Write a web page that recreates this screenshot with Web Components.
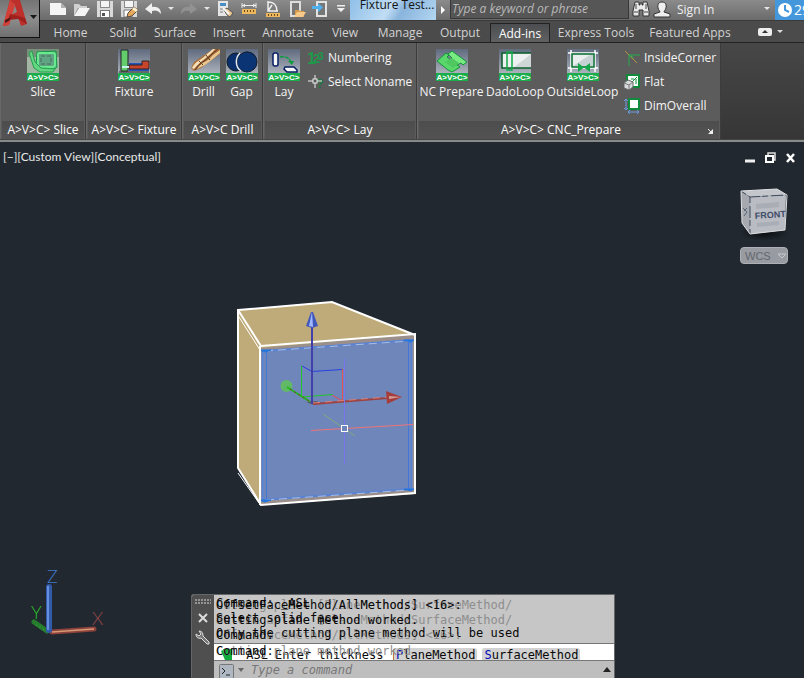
<!DOCTYPE html>
<html lang="en">
<head>
<meta charset="utf-8">
<title>Fixture Test</title>
<style>
html,body{margin:0;height:100%;overflow:hidden;background:#21282f;font:12px/16px "Open Sans","Noto Sans",sans-serif;color:#f0f0f0}
cad-app{height:100vh}
</style>
</head>
<body>
<cad-app></cad-app>
<script>
const define = (name, html) => customElements.define(name, class extends HTMLElement {
  constructor() {
    super();
    this.attachShadow({ mode: 'open' });
  }
  connectedCallback() {
    if (this.shadowRoot.childNodes.length) return;
    const base = '<style>*{box-sizing:border-box}button,input{font:inherit;color:inherit;background:none;border:0;margin:0;padding:0}svg{display:block}</style>';
    const tpl = document.createElement('template');
    tpl.innerHTML = base + (typeof html === 'function' ? html(this) : html);
    this.shadowRoot.append(tpl.content.cloneNode(true));
  }
});

const badge = '<rect y="24" width="32" height="8" fill="#1bad4b"/><text x="16" y="31" text-anchor="middle" font-family="Liberation Sans,sans-serif" font-weight="700" font-size="8" fill="#fff">A&gt;V&gt;C&gt;</text>';
const plate = '<defs><linearGradient id="g" x1="0" y1="0" x2="0" y2="1"><stop offset="0" stop-color="#5f6a7e"/><stop offset="1" stop-color="#c4c9cf"/></linearGradient></defs><rect width="32" height="32" fill="url(#g)"/>';

const icons = {
  new: [20, 20, '<path d="M3 3H14L19 8V15H3Z" fill="#f4f4f4"/><path d="M14 3V8H19Z" fill="#b0b0b0"/>'],
  open: [20, 20, '<path d="M3 14V4H8L10 6H16V8H7L3 16Z" fill="#d0d0d0"/><path d="M8 8H19L14 16H3Z" fill="#f4f4f4"/>'],
  save: [20, 20, '<path d="M2 1H18V17H2Z" fill="#dadada"/><path d="M5 1H15V8H5Z" fill="#8a8a8a"/><path d="M6 1H14V7H6Z" fill="#f4f4f4"/><path d="M5 10H15V17H5Z" fill="#777"/><path d="M6 11H14V17H6Z" fill="#fff"/><path d="M7 13H10V16H7Z" fill="#555"/>'],
  saveas: [20, 20, '<path d="M2 1H18V17H2Z" fill="#dadada"/><path d="M5 1H15V8H5Z" fill="#8a8a8a"/><path d="M6 1H14V7H6Z" fill="#f4f4f4"/><path d="M5 10H13V17H5Z" fill="#fff" stroke="#777"/><path d="M9 13L15 7L19 10L13 16L8 17Z" fill="#e5a85c" stroke="#5a4a3a"/><path d="M15 7L19 10L17 12L13 9Z" fill="#fff1d0"/>'],
  undo: [20, 20, '<path d="M2 9L9 3V7C15 6 18 9 18 14C15 10 12 10 9 11V14Z" fill="#efefef"/>'],
  redo: [20, 20, '<path d="M18 9L11 3V7C5 6 2 9 2 14C5 10 8 10 11 11V14Z" fill="#929292"/>'],
  match: [20, 20, '<path d="M3 1H13V16H3Z" fill="#e6e6e6"/><path d="M5 3H11V6H5Z" fill="#4a90c8"/><path d="M5 9H10M5 12H8" stroke="#777"/><path d="M9 10L12 8L18 13L15 17L12 15Z" fill="#e9c58f" stroke="#555"/><path d="M8 8L14 14" stroke="#f6f6f6" stroke-width="2"/>'],
  measure: [20, 20, '<path d="M3 3V8M17 3V8M3 5.5H17M6 4L4 5.5L6 7M14 4L16 5.5L14 7" stroke="#eee" fill="none"/><path d="M3 9H17V14H3Z" fill="#edb75d"/><path d="M5.5 10V12M8.5 10V12M11.5 10V12M14.5 10V12" stroke="#6b4a1c"/>'],
  angle: [20, 20, '<path d="M5 1V11H15M5 2C11 2 14 6 14 11M5 11L9 5" stroke="#eee" fill="none" stroke-width="1.5"/><path d="M3 13H17V17H3Z" fill="#edb75d"/><path d="M5.5 14V16M8.5 14V16M11.5 14V16M14.5 14V16" stroke="#6b4a1c"/>'],
  mopen: [20, 20, '<path d="M4 2H13V16H4Z" fill="#777" stroke="#ddd" stroke-width="2"/><path d="M8 10H12L13 11H17V17H8Z" fill="#d79a4a"/><path d="M10 12H19L16 17H7Z" fill="#f5c987"/>'],
  msave: [20, 20, '<path d="M6 2H15V16H6Z" fill="#777" stroke="#e2e2e2" stroke-width="2"/><path d="M1 6H7V3L12 7.5L7 12V9H1Z" fill="#4fb0ee"/>'],
  caret: [10, 20, '<path d="M2 7H8L5 10Z" fill="#e6e6e6"/>'],
  more: [10, 20, '<path d="M1 5H9V6.5H1ZM1 8H9L5 12Z" fill="#f0f0f0"/>'],
  binoc: [18, 18, '<path d="M3 2H7V5H8V3H10V5H11V2H15L17 11V16H11V10H7V16H1V11Z" fill="#e9e9e9" stroke="#333"/><path d="M2 12H6M12 12H16M4 4V9M14 4V9" stroke="#444"/>'],
  user: [18, 18, '<path d="M9 1C13 1 13.5 4 13 7C12.5 9 11 10 11 11L17 13V16H1V13L7 11C7 10 5.5 9 5 7C4.5 4 5 1 9 1Z" fill="#eee" stroke="#333"/>'],
  clock: [16, 18, '<circle cx="8" cy="9" r="7" fill="#fff"/><path d="M8 4V9L12 11" fill="none" stroke="#4597dc" stroke-width="2"/>'],
  slice: [32, 32, '<rect width="32" height="32" fill="#a2b7a3"/><rect width="32" height="8" fill="#78917b"/><path d="M10 3L29 2L30 18L26 22L13 21L9 17Z" fill="#4fae78" stroke="#159846"/><path d="M11 5Q11 4 13 4H26Q28 4 28 6V16Q28 18 25 18H13Q11 18 11 16Z" fill="#5fa583" stroke="#69e98d" stroke-width="2"/><path d="M14 7H24V15H14Z" fill="none" stroke="#4d675a" stroke-dasharray="4 2"/><path d="M2 4L5 2L8 13L14 19L28 20L26 23H13L7 19Z" fill="#62d482" stroke="#249f4c"/>' + badge],
  fixture: [32, 32, plate + '<path d="M3 1H10V22H3Z" fill="#63cd6c" stroke="#222"/><path d="M11 14H25V16H11ZM11 20H31V22H11Z" fill="#2455bd"/><path d="M11 16H24V12H31V20H11Z" fill="#c8452c" stroke="#332222"/><path d="M4 18H11" stroke="#c5f4f0" stroke-width="2"/><path d="M1 23H31" stroke="#222"/>' + badge],
  drill: [32, 32, plate + '<path d="M25 0H32V5L13 19L6 22L3 19L6 13Z" fill="#a8713f"/><path d="M4 19C7 12 14 11 19 5L25 0L27 0C22 7 12 12 6 20Z" fill="#f6e0b8"/><path d="M9 20C13 13 20 13 25 6L32 1V4C27 8 23 12 17 16Z" fill="#e8c791"/><path d="M7 21C11 14 18 12 24 5L30 0" fill="none" stroke="#5f341c"/><path d="M11 12L15 16M18 6L22 11" stroke="#6b3f24"/>' + badge],
  gap: [32, 32, plate + '<ellipse cx="10" cy="13" rx="9" ry="9" fill="#092f6d" stroke="#101820"/><path d="M18 3C26 1 31 6 31 13C31 20 25 24 18 21Z" fill="#092f6d"/><ellipse cx="21" cy="13" rx="10" ry="10" fill="#0a3474" stroke="#182030"/><path d="M14 4C9 9 9 18 15 22" fill="none" stroke="#dfe6ef" stroke-width="1.5"/>' + badge],
  lay: [32, 32, plate + '<rect x="5" y="4" width="5" height="13" rx="2" fill="#f7f7f7" stroke="#071f63" stroke-width="1.5"/><path d="M17 18H26L29 21V23H19L16 20Z" fill="#f7f7f7" stroke="#071f63" stroke-width="1.5"/><path d="M12 8C18 7 22 9 23 14" fill="none" stroke="#0c9d3e" stroke-width="1.5" stroke-dasharray="4 1"/><path d="M20 12H26L24 16Z" fill="#0c9d3e"/>' + badge],
  nc: [32, 32, plate + '<path d="M1 12L10 4L13 6L11 8L24 18L16 23L12 21Z" fill="#59d76a" stroke="#14933a"/><path d="M12 5L16 2L31 13L27 16L25 14L21 16L14 11L16 9Z" fill="#78ea82" stroke="#14933a"/><path d="M9 13L16 9L23 14L17 19Z" fill="#50c760"/>' + badge],
  dado: [32, 32, plate + '<path d="M3 4H32V19H3Z" fill="#cfd6d6"/><path d="M4 5H32L14 19H4Z" fill="#eef1f1"/><path d="M32 4H3V19H32" stroke="#0b5d2b" stroke-width="1.5" fill="none"/><rect x="8" y="3" width="5" height="18" fill="none" stroke="#13aa48" stroke-width="1.5"/>' + badge],
  outside: [32, 32, plate + '<path d="M1 4H31M1 19H31M4 1V23M28 1V23" stroke="#fff" stroke-width="1.5"/><rect x="5" y="5" width="22" height="13" fill="#c5d1d2" stroke="#0b7434" stroke-width="1.5"/><path d="M6 17L23 6H6Z" fill="#e9eeee"/><path d="M11 14L17 18.5L11 23ZM23 14L17 18.5L23 23Z" fill="#12a84a"/>' + badge],
  num: [16, 16, '<g font-family="Liberation Sans,sans-serif" font-weight="700" fill="#1c9a4a"><text x="-1" y="14" font-size="16">1</text><text x="5" y="13" font-size="13">2</text><text x="10" y="10" font-size="10">3</text></g>'],
  noname: [16, 16, '<text x="8" y="14" font-family="Liberation Sans,sans-serif" font-weight="700" font-size="12" fill="#157a3a">?</text><path d="M7 1V14M0 7H14" stroke="#eee"/><rect x="5" y="5" width="4" height="4" fill="#5b5b5b" stroke="#eee"/>'],
  corner: [16, 16, '<path d="M1 1L13 13" stroke="#b49345"/><path d="M5 16V5H16M5 5L10 8" stroke="#25ad50" fill="none"/>'],
  flat: [16, 16, '<rect x="3" y="1" width="12" height="12" fill="#f5fff7" stroke="#118a3c" stroke-width="2"/><path d="M8 8L13 3M7 5H10M12 5V10" stroke="#118a3c" fill="none"/><path d="M0 9L4 6L9 8V13L5 16L0 14Z" fill="#d8dadd" stroke="#666"/><path d="M0 9L5 11L9 8M5 11V16" stroke="#777" fill="none"/>'],
  dim: [16, 16, '<rect x="5" y="1" width="10" height="10" fill="#fff" stroke="#118a3c" stroke-width="2"/><path d="M2 1V12M0 3L2 1L4 3M0 10L2 12L4 10M4 14H15M6 12L4 14L6 16M13 12L15 14L13 16" stroke="#6d9be0" fill="none"/>']
};
const svg = n => `<svg width="${icons[n][0]}" height="${icons[n][1]}" viewBox="0 0 ${icons[n][0]} ${icons[n][1]}" aria-hidden="true">${icons[n][2]}</svg>`;

define('icon-button', el => `<style>:host{display:block;flex:0 0 24px}:host([narrow]){flex-basis:12px}:host([wide]){flex-basis:16px}
button{width:100%;height:20px;display:flex;justify-content:center;align-items:flex-start}</style>
<button aria-label="${el.getAttribute('label')}">${svg(el.getAttribute('icon'))}</button>`);

define('ribbon-tab', `<style>:host{display:block;flex:none;color:#d2d2d2}
button{width:100%;height:20px;white-space:nowrap;line-height:18px;text-align:center}
:host([active]){color:#fff}:host([active]) button{background:linear-gradient(#4b4d50,#626262);border:1px solid #222;border-bottom:0;line-height:16px}</style>
<button><slot></slot></button>`);

define('tool-button', el => `<style>:host{display:block}button{display:flex;flex-direction:column;align-items:center;width:100%;white-space:nowrap;color:#f4f4f4}
span{line-height:22px}
:host([small]) button{flex-direction:row;gap:4px;height:24px}</style>
<button>${svg(el.getAttribute('icon'))}<span><slot></slot></span></button>`);

define('ribbon-panel', el => `<style>:host{display:flex;flex-direction:column;background:#5c5c5c;border-right:1px solid #3c3c3c;border-left:1px solid #686868}
.body{flex:1;display:flex;justify-content:center;padding-top:6px}
:host([start]) .body{justify-content:flex-start}
footer{display:flex;align-items:center;height:18px;margin:0 1px;background:linear-gradient(#4d4d4d,#535353);color:#fff;white-space:nowrap}
footer span{flex:1;text-align:center;line-height:18px}footer button{width:16px;height:16px}footer svg{margin:6px 4px 4px}</style>
<div class="body"><slot></slot></div>
<footer><span>${el.getAttribute('label')}</span>${el.hasAttribute('launcher') ? '<button aria-label="Panel settings"><svg width="7" height="7"><path d="M1 1L4 4" stroke="#eee"/><path d="M6 1V6H1Z" fill="#eee"/></svg></button>' : ''}</footer>`);

define('app-menu', `<style>:host{display:block;flex:0 0 40px;height:38px}
button{width:40px;height:38px;background:linear-gradient(#747474,#8d8d8d 50%,#6f6f6f);border:1px solid #111;border-top:0;border-left:0}</style>
<button aria-label="Application menu"><svg width="39" height="37" viewBox="0 0 39 37"><path d="M10 0H20L27 24L21 26L18 17L11 18L9 25L3 26Z" fill="#bd2f2b"/><path d="M14 3L17 12L11 15Z" fill="#8c8685"/><path d="M10 0L3 26L9 25L15 5Z" fill="#d34038"/><path d="M10 14L25 18L27 24L18 19L8 20Z" fill="#9e211e"/><path d="M5 20L11 17L9 21L5 23Z" fill="#4f1917"/><path d="M30 15H37L33.5 19Z" fill="#181818"/></svg></button>`);

define('title-bar', `<style>:host{display:flex;height:20px;padding-left:5px;background:linear-gradient(#8b8b8b,#6b6b6b)}
.doc{flex:0 0 86px;text-align:center;margin-left:1px;padding-left:8px;height:20px;background:linear-gradient(120deg,#8fbfe8,#c1ddf3 45%,#89b4dc 60%,#b4d7f3);color:#151515;line-height:10px;white-space:nowrap}
.next{flex:0 0 14px;height:20px}.next svg{margin:4px 4px}
input{flex:1 1 178px;max-width:179px;min-width:0;height:19px;background:#565656;border:1px solid #383838;border-top:0;padding:0 1px 1px}
input::placeholder{color:#b9b9b9;font-style:italic;opacity:1}
.sign{display:flex;gap:6px;align-items:center;white-space:nowrap}
.spacer{flex:1}
.clock{flex:0 0 29px;overflow:hidden;display:flex;align-items:center;background:#4597dc;color:#fff;font-size:14px;padding-left:2px;gap:1px;white-space:nowrap}
.clock svg{flex:none}</style>
<icon-button icon="new" label="New"></icon-button><icon-button icon="open" label="Open"></icon-button><icon-button icon="save" label="Save"></icon-button><icon-button icon="saveas" label="Save as"></icon-button><icon-button icon="undo" label="Undo"></icon-button><icon-button narrow icon="caret" label="Undo list"></icon-button><icon-button icon="redo" label="Redo"></icon-button><icon-button narrow icon="caret" label="Redo list"></icon-button><icon-button icon="match" label="Match properties"></icon-button><icon-button icon="measure" label="Distance"></icon-button><icon-button icon="angle" label="Angle"></icon-button><icon-button icon="mopen" label="Open from mobile"></icon-button><icon-button icon="msave" label="Save to mobile"></icon-button><icon-button wide icon="more" label="Customize"></icon-button>
<div class="doc">Fixture Test...</div>
<button class="next" aria-label="Show search"><svg width="6" height="10"><path d="M1 1V9L5 5Z" fill="#fff"/></svg></button>
<input type="text" aria-label="Search" placeholder="Type a keyword or phrase">
<icon-button icon="binoc" label="Search help"></icon-button>
<button class="sign">${svg('user')}Sign In</button>
<span class="spacer"></span>
<icon-button wide icon="caret" label="Account menu"></icon-button>
<button class="clock">${svg('clock')}29</button>`);

define('tab-strip', () => {
  const tabs = [['Home',55],['Solid',50],['Surface',54],['Insert',54],['Annotate',64],['View',50],['Manage',60],['Output',60],['Add-ins',60],['Express Tools',92],['Featured Apps',96]];
  return `<style>:host{display:flex;height:22px;padding:2px 0 0 3px;background:#4b4b4b;border-top:1px solid #3a3a3a}
.min{display:flex;gap:5px;align-items:center;padding-left:20px;height:18px}</style>
${tabs.map(([t, w]) => `<ribbon-tab style="width:${w}px"${t === 'Add-ins' ? ' active' : ''}>${t}</ribbon-tab>`).join('')}
<button class="min" aria-label="Minimize ribbon"><svg width="14" height="8"><rect width="14" height="8" rx="2" fill="#eee"/><path d="M4 5L7 2L10 5Z" fill="#333"/></svg><svg width="6" height="4"><path d="M0 0H6L3 3Z" fill="#ddd"/></svg></button>`;
});

define('ribbon-bar', `<style>:host{display:flex;height:98px;background:linear-gradient(#474747,#363636);border-top:1px solid #222;border-bottom:1px solid #444;box-shadow:0 2px #868a88;margin-bottom:3px}
.col{display:flex;flex-direction:column;align-items:flex-start;margin:-3px 0 0 4px}</style>
<ribbon-panel label="A&gt;V&gt;C&gt; Slice" style="width:86px"><tool-button icon="slice">Slice</tool-button></ribbon-panel>
<ribbon-panel label="A&gt;V&gt;C&gt; Fixture" style="width:96px"><tool-button icon="fixture">Fixture</tool-button></ribbon-panel>
<ribbon-panel label="A&gt;V&gt;C Drill" style="width:81px"><tool-button icon="drill" style="width:38px">Drill</tool-button><tool-button icon="gap" style="width:38px">Gap</tool-button></ribbon-panel>
<ribbon-panel start label="A&gt;V&gt;C&gt; Lay" style="width:154px"><tool-button icon="lay" style="width:40px">Lay</tool-button><div class="col"><tool-button small icon="num">Numbering</tool-button><tool-button small icon="noname">Select Noname</tool-button></div></ribbon-panel>
<ribbon-panel start launcher label="A&gt;V&gt;C&gt; CNC_Prepare" style="width:304px"><tool-button icon="nc" style="width:67px">NC Prepare</tool-button><tool-button icon="dado" style="width:60px">DadoLoop</tool-button><tool-button icon="outside" style="width:75px">OutsideLoop</tool-button><div class="col"><tool-button small icon="corner">InsideCorner</tool-button><tool-button small icon="flat">Flat</tool-button><tool-button small icon="dim">DimOverall</tool-button></div></ribbon-panel>`);

define('view-cube', `<style>:host{display:flex;flex-direction:column;align-items:center;gap:6px}
.wcs{width:48px;height:17px;border-radius:4px;background:#989ba1;border:1px solid #aeb0b5;color:#63676e;font:11px/14px "Liberation Sans",sans-serif;display:flex;align-items:center;gap:6px;padding-left:4px}</style>
<svg width="56" height="56" viewBox="738 184 56 56" role="img" aria-label="View cube"><defs><radialGradient id="s"><stop offset="0" stop-color="#0b0e12"/><stop offset="1" stop-color="#0b0e12" stop-opacity="0"/></radialGradient></defs><ellipse cx="766" cy="232" rx="25" ry="8" fill="url(#s)"/>
<path d="M743 190L779 188L789 194L752 196Z" fill="#c3c6ca"/><path d="M743 190L752 196V233L744 222Z" fill="#a6aab0"/><path d="M752 196L788 194L787 229L752 233Z" fill="#b9bcc2"/>
<path d="M743 190L752 196L788 194M752 196V233" fill="none" stroke="#3f4c5c" stroke-dasharray="6 3 12 2"/><path d="M743 190L779 188L789 194L787 229L752 233L744 222Z" fill="none" stroke="#dddfe2"/>
<path d="M758 203L781 201V206L758 208ZM759 222L781 220V224L759 226Z" fill="#a9adb5"/><path d="M745 207L749 211L746 215M749 207L746 210" stroke="#5d6979" fill="none"/>
<text x="757" y="218" transform="rotate(-4 757 218)" font-family="Liberation Sans,sans-serif" font-weight="700" font-size="9" fill="#3f4c68">FRONT</text></svg>
<button class="wcs">WCS<svg width="10" height="6"><path d="M1 1H9L5 5Z" fill="none" stroke="#c6c8cc"/></svg></button>`);

define('cube-model', `<style>:host{display:block}</style>
<svg width="200" height="220" viewBox="230 295 200 220" role="img" aria-label="Solid model">
<path d="M238 310L332 302L415 335L414 493L261 505L238 468Z" fill="#bfab79"/>
<path d="M260 348L415 334V494L260 505Z" fill="#9a8f8a"/><path d="M263 351L412 340V489L263 500Z" fill="#6f86bb"/>
<path d="M262.5 352V500M411.5 341V489M263 351L412 340M263 500L412 489" stroke="#5a83d4" stroke-width="2"/><path d="M266.5 351V499M408.5 341V489" stroke="#4477d6"/><path d="M265 351L410 341M266 500L410 490" stroke="#a9bde2" stroke-dasharray="8 5"/>
<path d="M259 350H271L265 352ZM404 340H414L411 342ZM259 500H271L265 502ZM404 489H414L411 491Z" fill="#2476df" stroke="#2476df"/>
<path d="M238 310L332 302L415 335M238 309V468L261 505L415 493V334L261 346L238 310M260 346V505" fill="none" stroke="#fff" stroke-width="2"/>
<path d="M239 317L260 350M238 473L259 503" fill="none" stroke="#fff"/>
<path d="M301.5 366V397" stroke="#1fc527"/><path d="M302 366L312 371.5L342 369.5" stroke="#2940df" fill="none"/><path d="M342.5 369V401L332 395" stroke="#e65050" fill="none"/><path d="M302 397L333 394.500" stroke="#1fc527"/>
<circle cx="286.5" cy="386" r="6" fill="#61b967"/><path d="M287 387L312 403" stroke="#20ba20" stroke-width="2"/><path d="M290 389L312 403" stroke="#8c3028" stroke-dasharray="2 3"/>
<path d="M306 402L316 401L322 403L314 405Z" fill="#5e5968"/><path d="M312 404V325" stroke="#423fa9" stroke-width="2"/><path d="M306 326L311 312H313L318 326L312 328Z" fill="#4257bb"/><path d="M309 326L312 312L313 327Z" fill="#9db9ff"/>
<path d="M313 404L388 398" stroke="#9e4141" stroke-width="2"/><path d="M313 403L388 397" stroke="#df8073" stroke-dasharray="7 5"/><path d="M386 391L402 397L387 404Z" fill="#a43e3c"/><path d="M389 396L401 397L389 399Z" fill="#d59b96"/>
<path d="M344.5 359V464" stroke="#7873ee"/><path d="M311 430.5L413 424.5" stroke="#ee7377"/><path d="M323 414L355 436" stroke="#80aa7d"/><rect x="341.5" y="425.5" width="6" height="6" fill="#6f86bb" stroke="#fff"/>
</svg>`);

define('ucs-icon', `<style>:host{display:block}text{font-family:Lato,sans-serif;font-weight:300}</style>
<svg width="84" height="76" viewBox="25 564 84 76" role="img" aria-label="UCS axes"><path d="M34 622L47 631" stroke="#267d2e" stroke-width="5" stroke-linecap="round"/><path d="M36 625L46 631" stroke="#3dbb42" stroke-dasharray="1 3"/><path d="M52 632L94 629" stroke="#8d423e" stroke-width="5" stroke-linecap="round"/><path d="M52 632L94 629" stroke="#d59a72" stroke-width="1.5"/><path d="M49 587V630" stroke="#315ba9" stroke-width="6" stroke-linecap="round"/><path d="M48 586V630" stroke="#6690df" stroke-width="2"/>
<text x="47" y="583" font-size="18" fill="#4078cc">Z</text><text x="31" y="619" font-size="18" fill="#29c129">Y</text><text x="92" y="625" font-size="18" fill="#98494d">X</text></svg>`);

define('command-window', `<style>:host{display:flex;background:#c6c6c6;color:#080808;font:12px/15px "DejaVu Sans Mono",monospace;border:1px solid #666;border-bottom:0;border-radius:3px 0 0 0;overflow:hidden}
.rail{flex:0 0 22px;background:#4f4f4f;display:flex;flex-direction:column;align-items:center;gap:7px;padding-top:4px}
.main{flex:1;min-width:0}
.log{height:48px;padding-top:3px}
.row{position:relative;height:15px;white-space:pre}
.row span{position:absolute;left:2px;top:0}.row .up{top:-2px}
.row .ghost,.now .ghost{color:#8e8e8e}
.now{position:relative;height:18px;background:#fff;border-top:1px solid #777;border-bottom:1px solid #777;white-space:pre;overflow:hidden}
.now>*{position:absolute;top:0;left:2px}
.now .prompt{left:6px;top:4px;display:flex;gap:5px}
.now .opts{left:180px}
.opt{background:#d2d2d2;border-radius:3px;padding:0 2px}.opt b{font-weight:400;color:#0008b8}
.entry{height:17px;display:flex;align-items:flex-end;background:#bebebe;padding:0 3px 0 5px;gap:4px}
.entry svg{flex:none}.entry .mark{align-self:center}
.entry input{flex:1;min-width:0;height:15px;padding-left:3px}.entry input::placeholder{color:#777;opacity:1;font-style:italic}</style>
<div class="rail"><svg width="16" height="7"><path d="M0 1H16M0 4H16" stroke="#949494" stroke-width="2" stroke-dasharray="2 1"/></svg><button aria-label="Close"><svg width="10" height="10"><path d="M1 1L9 9M9 1L1 9" stroke="#ddd" stroke-width="2"/></svg></button><button aria-label="Customize"><svg width="16" height="16" viewBox="0 0 16 16"><path d="M4 1C7 1 8 3 8 6L14 12Q15 15 12 14L6 8C3 9 1 7 1 4L4 6L6 4Z" fill="#777" stroke="#ddd"/></svg></button></div>
<div class="main"><div class="log">
<div class="row"><span class="ghost">Cutting plane [PlaneMethod/SurfaceMethod/</span><span class="up">Command: _ASL</span><span>OffsetFaceMethod/AllMethods] &lt;16&gt;:</span></div>
<div class="row"><span class="ghost">Select a face [PlaneMethod/SurfaceMethod/</span><span class="up">Select solid face</span><span>Cutting plane method worked.</span></div>
<div class="row"><span class="ghost">OffsetFaceMethod/AllMethods] &lt;16&gt;:</span><span>Command:</span><span class="up">Only the cutting plane method will be used</span></div></div>
<div class="now"><div class="prompt"><svg width="14" height="14"><path d="M3 1H12V12H5L1 3L3 2L5 8Z" fill="#11ac3e"/></svg><span> ASL Enter thickness [</span></div><div class="prompt opts"><span class="opt"><b>P</b>laneMethod</span><span class="opt"><b>S</b>urfaceMethod</span></div><span class="ghost">Cutting plane method worked</span><span>Command:</span></div>
<label class="entry"><svg width="15" height="14"><rect x=".5" y=".5" width="14" height="15" rx="1" fill="#aeb7c2" stroke="#777"/><path d="M3 4L6 7L3 10M7 11H11" stroke="#222" fill="none"/></svg><svg class="mark" width="6" height="4"><path d="M0 0H6L3 4Z" fill="#666"/></svg><input type="text" aria-label="Command" placeholder="Type a command"><svg class="mark" width="8" height="5"><path d="M0 5L4 0L8 5Z" fill="#222"/></svg></label></div>`);

define('view-port', `<style>:host{display:block;position:relative;flex:1;min-height:0;overflow:hidden;background:#21282f}
.top{display:flex;justify-content:space-between;padding:6px 8px 0 3px}
.views{font-family:Lato,sans-serif;color:#e8e8e8;white-space:nowrap}
.win{display:flex;gap:9px;padding-top:2px}
view-cube{position:absolute;right:12px;top:42px}
cube-model{position:absolute;left:230px;top:152px}
ucs-icon{position:absolute;left:25px;bottom:38px}
command-window{position:absolute;left:191px;right:189px;bottom:0}</style>
<div class="top"><div class="views">[−][Custom View][Conceptual]</div><div class="win">
<button aria-label="Minimize"><svg width="12" height="12"><path d="M1 9H11" stroke="#f0f0f0" stroke-width="3"/></svg></button><button aria-label="Restore"><svg width="11" height="12"><path d="M3 3V1H10V8H8" stroke="#ddd" stroke-width="1.5" fill="none"/><path d="M1 4H8V10H1Z" stroke="#fff" stroke-width="2" fill="none"/></svg></button><button aria-label="Close"><svg width="11" height="12"><path d="M2 2L9 10M9 2L2 10" stroke="#fff" stroke-width="2.5"/></svg></button></div></div>
<cube-model></cube-model><view-cube></view-cube><ucs-icon></ucs-icon><command-window></command-window>`);

define('cad-app', `<style>:host{display:flex;flex-direction:column}header{display:flex;background:#4b4b4b}.head{flex:1;min-width:0}</style>
<header><app-menu></app-menu><div class="head"><title-bar></title-bar><tab-strip></tab-strip></div></header>
<ribbon-bar></ribbon-bar><view-port></view-port>`);
</script>
</body>
</html>
